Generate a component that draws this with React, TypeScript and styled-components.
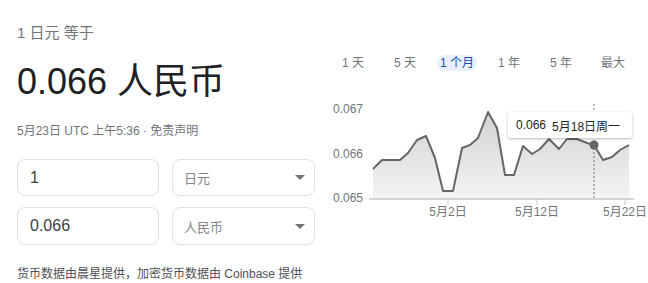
import React from 'react';
import styled, { createGlobalStyle } from 'styled-components';

// == styles =======================================================================================
const FONT = `'Liberation Sans', 'Noto Sans CJK SC', sans-serif`;

const GlobalStyle = createGlobalStyle`
  html, body {
    margin: 0;
    padding: 0;
    background: #fff;
  }
  body {
    font-family: ${ FONT };
    color: #202124;
  }
`;

const Root = styled.div`
  display: grid;
  grid-template-columns: 330px 318px;
  width: 648px;
  height: 283px;
  overflow: hidden;
`;

const Left = styled.div`
  display: flex;
  flex-direction: column;
  padding: 23px 0 0 17px;
`;

const Title = styled.div`
  font-size: 15px;
  line-height: 20px;
  color: #70757a;
`;

const Big = styled.div`
  margin-top: 17px;
  font-size: 36px;
  line-height: 44px;
  color: #202124;
`;

const Meta = styled.div`
  margin-top: 19px;
  font-size: 12px;
  line-height: 16px;
  color: #70757a;
`;

const Form = styled.div`
  margin-top: 20px;
  display: grid;
  grid-template-columns: 142px 143px;
  grid-template-rows: 37px 38px;
  column-gap: 13px;
  row-gap: 11px;
`;

const Box = styled.div`
  box-sizing: border-box;
  display: flex;
  align-items: center;
  border: 1px solid #dfe1e5;
  border-radius: 8px;
`;

const Amount = styled( Box )`
  padding-left: 12px;
  font-size: 16px;
  color: #3c4043;
`;

const Select = styled( Box )`
  padding: 0 9px 0 11px;
  font-size: 13px;
  color: #80868b;
`;

const Arrow = styled.span`
  margin-left: auto;
  width: 0;
  height: 0;
  border-left: 5px solid transparent;
  border-right: 5px solid transparent;
  border-top: 5px solid #757575;
`;

const Footer = styled.div`
  margin-top: 21px;
  font-size: 12px;
  line-height: 16px;
  color: #4d5156;
`;

const Right = styled.div`
  display: flex;
  flex-direction: column;
  padding-top: 55px;
`;

const Tabs = styled.div`
  display: flex;
  margin-left: -3px;
`;

const Tab = styled.div<{ $active?: boolean }>`
  width: 52px;
  display: flex;
  justify-content: center;
  font-size: 12px;
  line-height: 16px;

  span {
    padding: 0 3px;
    border-radius: 8px;
    color: ${ ( p ) => ( p.$active ? '#174ea6' : '#70757a' ) };
    background: ${ ( p ) => ( p.$active ? '#e8f0fe' : 'transparent' ) };
  }
`;

const ChartWrap = styled.div`
  position: relative;
  margin-top: 24px;
  width: 318px;
  height: 125px;
`;

const Tooltip = styled.div`
  position: absolute;
  left: 178px;
  top: 17px;
  width: 124px;
  height: 26px;
  box-sizing: border-box;
  display: flex;
  align-items: center;
  gap: 6px;
  padding-left: 8px;
  background: #fff;
  border-radius: 2px;
  box-shadow: 0 1px 3px rgba( 0, 0, 0, 0.28 );
  font-size: 12px;
  color: #202124;
`;

// == data =========================================================================================
const points: [ number, number ][] = [
  [ 373, 169 ], [ 382, 160 ], [ 400, 160 ], [ 408, 153 ], [ 417, 140 ], [ 426, 136 ],
  [ 435, 158 ], [ 443, 191 ], [ 453, 191 ], [ 462, 148 ], [ 470, 145 ], [ 478, 138 ],
  [ 488, 112 ], [ 497, 128 ], [ 505, 175 ], [ 514, 175 ], [ 523, 146 ], [ 532, 154 ],
  [ 540, 149 ], [ 549, 139 ], [ 559, 149 ], [ 567, 139 ], [ 577, 139 ], [ 587, 143 ],
  [ 594, 145 ], [ 603, 160 ], [ 612, 157 ], [ 620, 150 ], [ 629, 145 ],
];

const tabs = [ '1 天', '5 天', '1 个月', '1 年', '5 年', '最大' ];

const Chart = (): JSX.Element => {
  const line = points.map( ( p ) => p.join( ',' ) ).join( ' ' );
  const area = `${ line } 629,199 373,199`;

  return (
    <svg width="318" height="125" viewBox="0 0 318 125">
      <defs>
        <linearGradient id="fill" x1="0" y1="0" x2="0" y2="1">
          <stop offset="0" stopColor="#d2d2d2" />
          <stop offset="1" stopColor="#f4f4f4" />
        </linearGradient>
      </defs>
      <g transform="translate(-330,-95)" fontFamily={ FONT } fontSize="12" fill="#70757a">
        <polygon points={ area } fill="url(#fill)" />
        <line x1="594" y1="104" x2="594" y2="199" stroke="#777" strokeWidth="1" strokeDasharray="2,2" />
        <polyline points={ line } fill="none" stroke="#666" strokeWidth="2" strokeLinejoin="round" />
        <circle cx="594" cy="145" r="4.5" fill="#666" />
        <line x1="369" y1="199" x2="634" y2="199" stroke="#c8c8c8" strokeWidth="1.5" />
        { [ 448, 537, 625 ].map( ( x ) => (
          <line key={ x } x1={ x } y1="199" x2={ x } y2="205" stroke="#c8c8c8" strokeWidth="1" />
        ) ) }
        <text x="333" y="113">0.067</text>
        <text x="333" y="158">0.066</text>
        <text x="333" y="202">0.065</text>
        <text x="448" y="216" textAnchor="middle">5月2日</text>
        <text x="537" y="216" textAnchor="middle">5月12日</text>
        <text x="625" y="216" textAnchor="middle">5月22日</text>
      </g>
    </svg>
  );
};

// == element ======================================================================================
export default function App(): JSX.Element {
  return (
    <Root>
      <GlobalStyle />
      <Left>
        <Title>1 日元 等于</Title>
        <Big>0.066 人民币</Big>
        <Meta>5月23日 UTC 上午5:36 · 免责声明</Meta>
        <Form>
          <Amount>1</Amount>
          <Select>日元<Arrow /></Select>
          <Amount>0.066</Amount>
          <Select>人民币<Arrow /></Select>
        </Form>
        <Footer>货币数据由晨星提供，加密货币数据由 Coinbase 提供</Footer>
      </Left>
      <Right>
        <Tabs>
          { tabs.map( ( t ) => (
            <Tab key={ t } $active={ t === '1 个月' }><span>{ t }</span></Tab>
          ) ) }
        </Tabs>
        <ChartWrap>
          <Chart />
          <Tooltip>
            <span>0.066</span>
            <span>5月18日周一</span>
          </Tooltip>
        </ChartWrap>
      </Right>
    </Root>
  );
}
